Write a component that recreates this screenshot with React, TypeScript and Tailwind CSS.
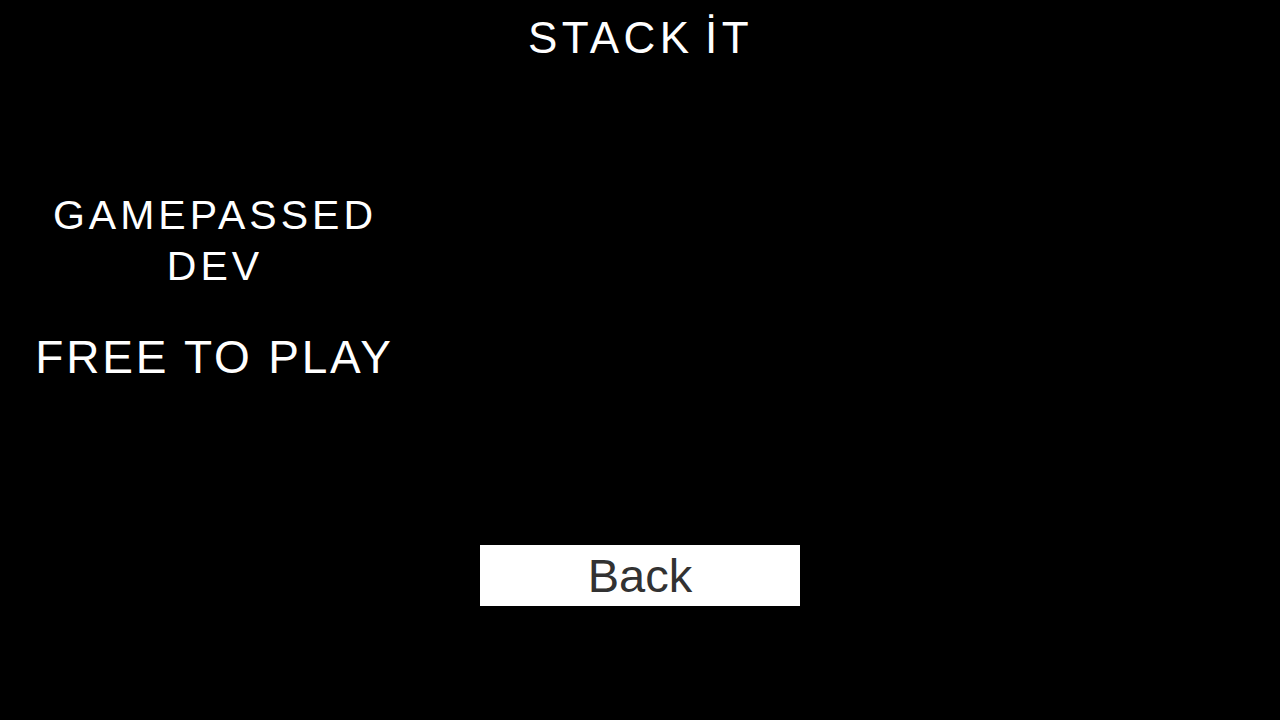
import React from "react";

export default function App() {
  return (
    <div
      className="w-[1280px] h-[720px] bg-black flex flex-col text-white overflow-hidden"
      style={{ fontFamily: '"Liberation Sans", Arial, sans-serif' }}
    >
      <h1 className="pt-[16px] pl-[1px] text-center text-[44px] leading-[44px] tracking-[4.4px] [word-spacing:-5px] font-normal">
        STACK İT
      </h1>
      <div className="mt-[130px] w-[426px] flex flex-col items-center text-center">
        <div className="pl-[4px] text-[41px] leading-[51px] tracking-[4px]">
          GAMEPASSED
          <br />
          DEV
        </div>
        <div className="mt-[42px] pl-[3px] text-[46px] leading-[46px] tracking-[2.8px]">
          FREE TO PLAY
        </div>
      </div>
      <div className="mt-[165px] flex justify-center">
        <button className="w-[320px] h-[61px] bg-white text-[#323232] text-[47px] leading-[47px] flex items-center justify-center">
          Back
        </button>
      </div>
    </div>
  );
}
